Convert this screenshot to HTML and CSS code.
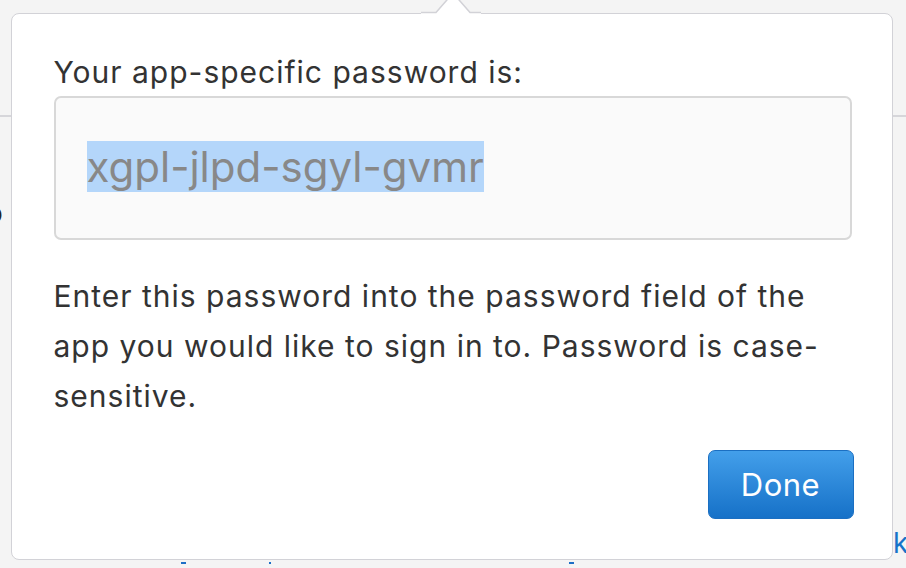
FILE: index.html
```html
<!DOCTYPE html>
<html>
<head>
<meta charset="utf-8">
<link rel="stylesheet" href="styles.css">
</head>
<body>
<div class="page">
  <div class="rule"></div>
  <span class="edge-glyph">o</span>
  <span class="peek-k">k</span>
  <div class="peek-row"><span class="d d1"></span><span class="d d2"></span><span class="d d3"></span></div>
</div>
<div class="popover">
  <svg class="arrow" width="60" height="20" viewBox="0 0 60 20">
    <path d="M0 17.5 H15 L32 -2 L49 17.5 H60 V20 H0 Z" fill="#fff"/>
    <path d="M0 17.5 H15 L32 -2 L49 17.5 H60" fill="none" stroke="#d2d2d7" stroke-width="1.5"/>
  </svg>
  <p class="title">Your app-specific password is:</p>
  <div class="field"><span class="pw">xgpl-jlpd-sgyl-gvmr</span></div>
  <p class="desc">Enter this password into the password field of the app you would like to sign in to. Password is case-sensitive.</p>
  <div class="actions"><button class="done">Done</button></div>
</div>
</body>
</html>
```
FILE: styles.css
```css
html, body {
  margin: 0;
  padding: 0;
  width: 906px;
  height: 568px;
  overflow: hidden;
  background: #f4f4f4;
  font-family: Inter, "Noto Sans", sans-serif;
}
.page {
  position: relative;
  width: 906px;
  height: 568px;
}
.rule {
  position: absolute;
  left: 0;
  right: 0;
  top: 115px;
  height: 1.5px;
  background: #d6d6da;
}
.edge-glyph {
  position: absolute;
  left: -14px;
  top: 196px;
  font-size: 28px;
  color: #222;
}
.peek-k {
  position: absolute;
  left: 893px;
  top: 526px;
  font-size: 28px;
  color: #1673c9;
}
.d {
  position: absolute;
  top: 562px;
  width: 5px;
  height: 2px;
  background: #1d6fc6;
}
.d1 { left: 181px; }
.d2 { left: 269px; width: 2px; }
.d3 { left: 569px; }
.popover {
  position: absolute;
  left: 11px;
  top: 13px;
  width: 882px;
  height: 547px;
  box-sizing: border-box;
  border: 1.5px solid #d2d2d7;
  border-radius: 8px;
  background: #fff;
  padding: 40px 40px 0 41.5px;
  display: flex;
  flex-direction: column;
}
.arrow {
  position: absolute;
  left: 409px;
  top: -19px;
}
.title {
  margin: 0;
  font-size: 30px;
  line-height: 36px;
  letter-spacing: 1px;
  color: #333;
}
.field {
  margin-top: 6px;
  width: 798px;
  height: 144px;
  box-sizing: border-box;
  border: 2px solid #d8d8d8;
  border-radius: 7px;
  background: #fafafa;
  display: flex;
  align-items: center;
  padding-left: 31px;
}
.pw {
  font-size: 42px;
  line-height: 51px;
  color: #888;
  background: #b4d6fa;
  margin-top: -3px;
}
.desc {
  margin: 31px 0 0;
  width: 790px;
  font-size: 30px;
  line-height: 50px;
  letter-spacing: 1px;
  color: #333;
}
.actions {
  margin-top: 29px;
  display: flex;
  justify-content: flex-end;
  width: 800px;
}
.done {
  width: 146px;
  height: 69px;
  border: 1px solid #1b6fc2;
  border-radius: 7px;
  background: linear-gradient(#439fea, #1671c8);
  color: #fff;
  font-family: inherit;
  font-size: 31px;
  letter-spacing: 0.5px;
  padding: 0;
}
```
